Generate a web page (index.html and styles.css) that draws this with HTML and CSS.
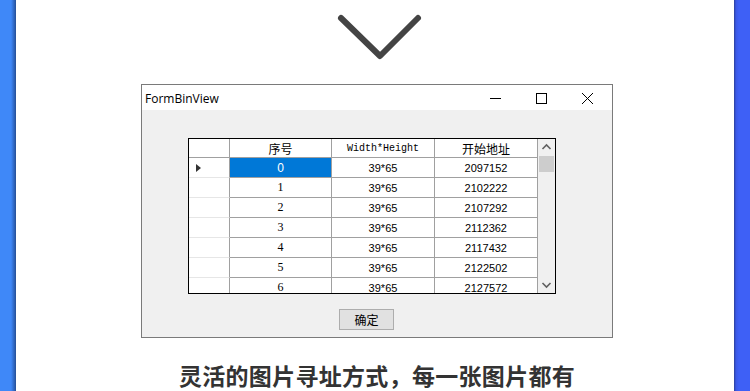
FILE: index.html
```html
<!DOCTYPE html>
<html lang="zh">
<head>
  <meta charset="UTF-8">
  <meta name="viewport" content="width=device-width, initial-scale=1.0">
  <title>FormBinView</title>
  <link rel="stylesheet" href="styles.css">
</head>
<body>
  <div class="page">
    <div class="strip strip-left"></div>

    <div class="main">
      <svg class="chevron" width="92" height="50" viewBox="0 0 92 50">
        <polyline points="7,6 46,44 84,6" fill="none" stroke="#444" stroke-width="6" stroke-linecap="round" stroke-linejoin="round"/>
      </svg>

      <div class="win">
        <div class="titlebar">
          <span class="wtitle">FormBinView</span>
          <div class="wctl">
            <svg width="46" height="26" viewBox="0 0 46 26"><line x1="17" y1="13.5" x2="28" y2="13.5" stroke="#000" stroke-width="1"/></svg>
            <svg width="46" height="26" viewBox="0 0 46 26"><rect x="17.5" y="8.5" width="10" height="10" fill="none" stroke="#000" stroke-width="1"/></svg>
            <svg width="46" height="26" viewBox="0 0 46 26"><path d="M17 8 L28 19 M28 8 L17 19" stroke="#000" stroke-width="1"/></svg>
          </div>
        </div>

        <div class="wbody">
          <div class="grid">
            <div class="cells">
              <div class="rh hd"></div>
              <div class="c hd cn">序号</div>
              <div class="c hd mono">Width*Height</div>
              <div class="c hd cn">开始地址</div>

              <div class="rh"><span class="arrow"></span></div>
              <div class="c idx sel">0</div>
              <div class="c num">39*65</div>
              <div class="c num">2097152</div>

              <div class="rh"></div>
              <div class="c idx">1</div>
              <div class="c num">39*65</div>
              <div class="c num">2102222</div>

              <div class="rh"></div>
              <div class="c idx">2</div>
              <div class="c num">39*65</div>
              <div class="c num">2107292</div>

              <div class="rh"></div>
              <div class="c idx">3</div>
              <div class="c num">39*65</div>
              <div class="c num">2112362</div>

              <div class="rh"></div>
              <div class="c idx">4</div>
              <div class="c num">39*65</div>
              <div class="c num">2117432</div>

              <div class="rh"></div>
              <div class="c idx">5</div>
              <div class="c num">39*65</div>
              <div class="c num">2122502</div>

              <div class="rh"></div>
              <div class="c idx">6</div>
              <div class="c num">39*65</div>
              <div class="c num">2127572</div>
            </div>
            <div class="scroll">
              <svg class="sarrow" width="17" height="17" viewBox="0 0 17 17"><polyline points="4.5,10 8.5,6 12.5,10" fill="none" stroke="#606060" stroke-width="1.6"/></svg>
              <div class="thumb"></div>
              <div class="track"></div>
              <svg class="sarrow" width="17" height="17" viewBox="0 0 17 17"><polyline points="4.5,7 8.5,11 12.5,7" fill="none" stroke="#606060" stroke-width="1.6"/></svg>
            </div>
          </div>
          <button class="okbtn">确定</button>
        </div>
      </div>

      <p class="caption">灵活的图片寻址方式，每一张图片都有</p>
    </div>

    <div class="strip strip-right"></div>
  </div>
</body>
</html>
```

FILE: styles.css
```css
*{
  margin:0;
  padding:0;
  box-sizing:border-box;
}
body{
  font-family:"Noto Sans","Noto Sans CJK SC",sans-serif;
  background:#fff;
}
.page{
  display:flex;
  width:750px;
  height:391px;
  overflow:hidden;
}
.strip{
  width:16px;
  flex:none;
}
.strip-left{
  background:linear-gradient(to right,#3f88f8 0,#3f88f8 11px,#2f66c0 14px,#254f96 16px);
}
.strip-right{
  background:linear-gradient(to right,#2b3f9a 0,#3a58e6 2px,#3e60f6 5px,#3e60f6 100%);
}
.main{
  flex:1;
  display:flex;
  flex-direction:column;
  align-items:flex-start;
  background:#fff;
  overflow:hidden;
}
.main > *{
  flex-shrink:0;
}
.chevron{
  margin-top:12px;
  margin-left:318px;
}

/* window */
.win{
  margin-top:22px;
  margin-left:125px;
  width:472px;
  height:254px;
  border:1px solid #7a7a7a;
  background:#f0f0f0;
  display:flex;
  flex-direction:column;
}
.titlebar{
  height:25px;
  background:#fff;
  display:flex;
  justify-content:space-between;
  align-items:center;
}
.wtitle{
  font-family:"Open Sans","Noto Sans",sans-serif;
  font-size:12px;
  color:#000;
  padding-left:3px;
  padding-top:1px;
}
.wctl{
  display:flex;
  margin-right:1px;
}
.wctl svg{
  display:block;
}
.wbody{
  flex:1;
  display:flex;
  flex-direction:column;
  align-items:flex-start;
  padding-top:28px;
}

/* data grid */
.grid{
  margin-left:46px;
  width:368px;
  height:156px;
  border:1px solid #000;
  background:#fff;
  display:flex;
  overflow:hidden;
}
.cells{
  width:349px;
  display:grid;
  grid-template-columns:41px 102px 103px 103px;
  grid-template-rows:19px;
  grid-auto-rows:20px;
  align-content:start;
}
.rh{
  border-right:1px solid #a0a0a0;
  border-bottom:1px solid #e6e6e6;
  display:flex;
  align-items:center;
  padding-left:7px;
}
.rh.hd{
  border-bottom:1px solid #a0a0a0;
}
.c{
  border-right:1px solid #a0a0a0;
  border-bottom:1px solid #a0a0a0;
  display:flex;
  align-items:center;
  justify-content:center;
  font-size:11px;
  color:#000;
  white-space:nowrap;
}
.hd.cn{
  font-family:"Noto Sans CJK SC",sans-serif;
  font-size:12px;
}
.hd.mono{
  font-family:"Liberation Mono",monospace;
  font-size:10px;
}
.idx{
  font-family:"Liberation Serif",serif;
  font-size:12px;
}
.num{
  font-family:"Liberation Sans",sans-serif;
  font-size:11px;
}
.sel{
  background:#0078d7;
  color:#fff;
  font-family:"Liberation Sans",sans-serif;
}
.arrow{
  width:0;
  height:0;
  border-top:4px solid transparent;
  border-bottom:4px solid transparent;
  border-left:5px solid #333;
}
.scroll{
  width:17px;
  background:#f0f0f0;
  display:flex;
  flex-direction:column;
}
.sarrow{
  display:block;
  flex:none;
}
.thumb{
  margin:0 1px;
  height:16px;
  background:#cdcdcd;
  flex:none;
}
.track{
  flex:1;
}

.okbtn{
  margin-top:15px;
  margin-left:197px;
  width:55px;
  height:21px;
  border:1px solid #adadad;
  background:#e1e1e1;
  font-family:"Noto Sans CJK SC",sans-serif;
  font-size:12px;
  color:#000;
}

.caption{
  margin-top:20px;
  align-self:center;
  margin-left:4px;
  font-family:"Noto Sans CJK SC",sans-serif;
  font-weight:700;
  font-size:23px;
  letter-spacing:0.3px;
  line-height:34px;
  color:#333;
  white-space:nowrap;
}
```
